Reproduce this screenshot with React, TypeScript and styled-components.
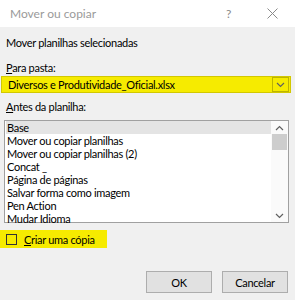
import React from 'react';
import styled, { createGlobalStyle } from 'styled-components';

const sheets = [
  'Base',
  'Mover ou copiar planilhas',
  'Mover ou copiar planilhas (2)',
  'Concat _',
  'Página de páginas',
  'Salvar forma como imagem',
  'Pen Action',
  'Mudar Idioma',
];

const GlobalStyle = createGlobalStyle`
  html, body {
    margin: 0;
    padding: 0;
    background: #f0f0f0;
  }
  body {
    font-family: Lato, "Noto Sans", sans-serif;
    font-size: 11px;
    letter-spacing: -0.3px;
    color: #000;
  }
`;

const Chevron = ({ up = false }: { up?: boolean }) => (
  <svg width="9" height="6" viewBox="0 0 9 6">
    <path
      d={up ? 'M1 5 L4.5 1.5 L8 5' : 'M1 1 L4.5 4.5 L8 1'}
      fill="none"
      stroke="#606060"
      strokeWidth="1.2"
    />
  </svg>
);

const App: React.FC = () => {
  return (
    <>
      <GlobalStyle />
      <Dialog>
        <TitleBar>
          <Title>Mover ou copiar</Title>
          <TitleButtons>
            <Help>?</Help>
            <svg width="11" height="11" viewBox="0 0 11 11">
              <path d="M0.5 0.5 L10.5 10.5 M10.5 0.5 L0.5 10.5" stroke="#8a8a8a" strokeWidth="1" />
            </svg>
          </TitleButtons>
        </TitleBar>

        <Content>
          <Heading>Mover planilhas selecionadas</Heading>

          <Label>
            <u>P</u>ara pasta:
          </Label>
          <Combo>
            <ComboText>Diversos e Produtividade_Oficial.xlsx</ComboText>
            <DropButton>
              <Chevron />
            </DropButton>
          </Combo>

          <Label spaced>
            <u>A</u>ntes da planilha:
          </Label>
          <ListBox>
            <Items>
              {sheets.map((name, i) => (
                <Item key={name} selected={i === 0}>
                  {name}
                </Item>
              ))}
            </Items>
            <ScrollBar>
              <ArrowCell>
                <Chevron up />
              </ArrowCell>
              <Thumb />
              <Track />
              <ArrowCell>
                <Chevron />
              </ArrowCell>
            </ScrollBar>
          </ListBox>

          <CheckRow>
            <CheckBox />
            <span>
              <u>C</u>riar uma cópia
            </span>
          </CheckRow>

          <Buttons>
            <Button>OK</Button>
            <Button>Cancelar</Button>
          </Buttons>
        </Content>
      </Dialog>
    </>
  );
};

const Dialog = styled.div`
  width: 295px;
  height: 300px;
  background: #f0f0f0;
  overflow: hidden;
`;

const TitleBar = styled.div`
  height: 27px;
  background: #fff;
  display: flex;
  align-items: center;
  justify-content: space-between;
  padding: 0 17px 0 10px;
  box-sizing: border-box;
`;

const Title = styled.div`
  font-size: 12px;
  letter-spacing: 0;
  color: #9a9a9a;
`;

const TitleButtons = styled.div`
  display: flex;
  align-items: center;
  gap: 36px;
`;

const Help = styled.span`
  font-size: 12px;
  color: #8a8a8a;
`;

const Content = styled.div`
  display: flex;
  flex-direction: column;
  padding-top: 8px;
`;

const Heading = styled.div`
  line-height: 16px;
  padding-left: 6px;
  margin-bottom: 9px;
`;

const Label = styled.div<{ spaced?: boolean }>`
  line-height: 16px;
  padding-left: 6px;
  margin-top: ${(p) => (p.spaced ? '6px' : '0')};
  margin-bottom: ${(p) => (p.spaced ? '5px' : '0')};
`;

const Combo = styled.div`
  margin-left: 1px;
  width: 290px;
  height: 17px;
  box-sizing: border-box;
  background: #f6eb00;
  border: 1px solid #d2c800;
  display: flex;
  align-items: center;
  justify-content: space-between;
`;

const ComboText = styled.span`
  padding-left: 6px;
  line-height: 15px;
`;

const DropButton = styled.div`
  width: 17px;
  height: 15px;
  box-sizing: border-box;
  border: 1px solid #bdb400;
  margin-right: 1px;
  display: flex;
  align-items: center;
  justify-content: center;
`;

const ListBox = styled.div`
  margin-left: 4px;
  width: 285px;
  height: 103px;
  box-sizing: border-box;
  border: 1px solid #a0a0a0;
  background: #fff;
  display: flex;
`;

const Items = styled.div`
  flex: 1;
  padding-left: 1px;
`;

const Item = styled.div<{ selected?: boolean }>`
  height: 13px;
  line-height: 13px;
  padding-left: 1px;
  background: ${(p) => (p.selected ? '#e4e4e4' : 'transparent')};
`;

const ScrollBar = styled.div`
  width: 17px;
  display: flex;
  flex-direction: column;
  align-items: center;
  background: #fafafa;
`;

const ArrowCell = styled.div`
  height: 13px;
  display: flex;
  align-items: center;
  justify-content: center;
`;

const Thumb = styled.div`
  width: 15px;
  height: 16px;
  background: #cdcdcd;
`;

const Track = styled.div`
  flex: 1;
`;

const CheckRow = styled.div`
  margin-top: 7px;
  width: 107px;
  height: 18px;
  background: #f6eb00;
  display: flex;
  align-items: center;
  gap: 7px;
  padding-left: 6px;
  box-sizing: border-box;
`;

const CheckBox = styled.div`
  width: 11px;
  height: 11px;
  box-sizing: border-box;
  border: 1px solid #333;
`;

const Buttons = styled.div`
  margin-top: 23px;
  display: flex;
  justify-content: flex-end;
  gap: 10px;
  padding-right: 7px;
`;

const Button = styled.button`
  width: 66px;
  height: 22px;
  background: #e1e1e1;
  border: 1px solid #adadad;
  font-family: inherit;
  font-size: 11px;
  letter-spacing: inherit;
  color: #000;
  padding: 0;
`;

export default App;
